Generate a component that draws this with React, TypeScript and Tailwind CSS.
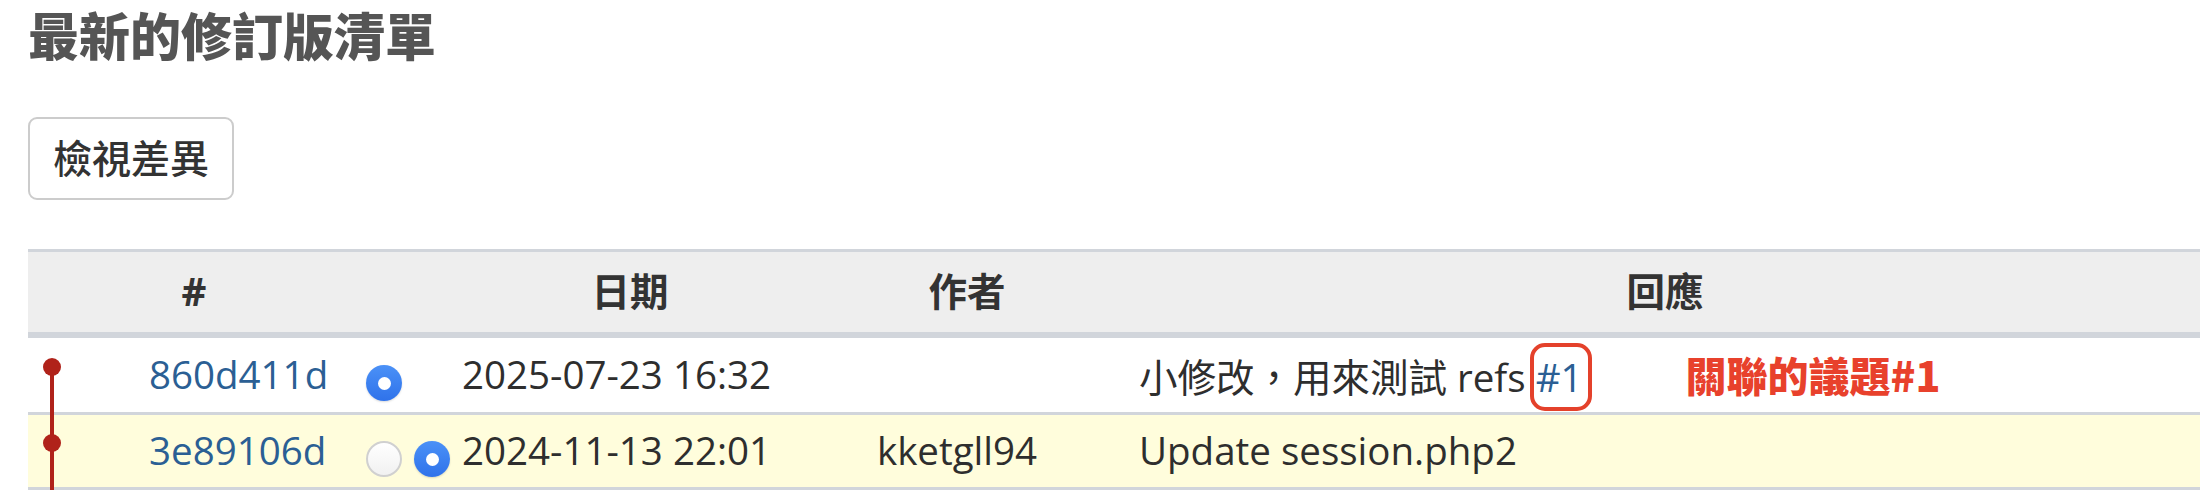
import React from "react";

type Revision = {
  id: string;
  date: string;
  author: string;
  comment: React.ReactNode;
  highlight: boolean;
  first: boolean;
};

const font = "font-['Open_Sans','Noto_Sans_CJK_TC',sans-serif]";

function Radio({ checked }: { checked: boolean }) {
  if (checked) {
    return (
      <span className="flex h-[36px] w-[36px] items-center justify-center rounded-full bg-gradient-to-b from-[#4b91f7] to-[#2f72ea] shadow-[0_1px_2px_rgba(0,0,0,0.15)]">
        <span className="h-[13px] w-[13px] rounded-full bg-white" />
      </span>
    );
  }
  return <span className="block h-[36px] w-[36px] rounded-full border-2 border-[#d0d0d0] bg-gradient-to-b from-white to-[#f1f1f1]" />;
}

const revisions: Revision[] = [
  {
    id: "860d411d",
    date: "2025-07-23 16:32",
    author: "",
    highlight: false,
    first: true,
    comment: (
      <>
        小修改，用來測試 refs{" "}
        <a className="relative text-[#2b5f94]">
          #1
          <span className="absolute -left-[6px] -right-[9px] -top-[8px] -bottom-[8px] rounded-[15px] border-[4px] border-[#e4412b]" />
        </a>
        <span className="ml-[103px] font-['Noto_Sans_CJK_TC',sans-serif] text-[41px] font-black text-[#e8412c]">關聯的議題#1</span>
      </>
    ),
  },
  {
    id: "3e89106d",
    date: "2024-11-13 22:01",
    author: "kketgll94",
    highlight: true,
    first: false,
    comment: "Update session.php2",
  },
];

export default function App() {
  return (
    <div className={`${font} w-[2208px] bg-white pl-[28px] text-[#2e2e2e]`}>
      <h2 className="h-[66px] pt-[4px] font-['Noto_Sans_CJK_TC',sans-serif] text-[51px] font-black leading-[60px] text-[#555555]">最新的修訂版清單</h2>

      <button type="button" className="mt-[51px] flex h-[83px] w-[206px] items-center justify-center rounded-[9px] border-2 border-[#cccccc] bg-white text-[39px] font-medium text-[#333333]">
        檢視差異
      </button>

      <div className="relative mt-[49px] w-[2172px]">
        <table className="w-full table-fixed border-separate border-spacing-0 text-[38.5px]">
          <colgroup>
            <col className="w-[332px]" />
            <col className="w-[48px]" />
            <col className="w-[48px]" />
            <col className="w-[348px]" />
            <col className="w-[326px]" />
            <col />
          </colgroup>
          <thead>
            <tr className="bg-[#eeeeee] font-bold text-[#333333]">
              <th className="h-[89px] border-t-[3px] border-b-[6px] border-[#d1d5db] text-center">#</th>
              <th className="h-[89px] border-t-[3px] border-b-[6px] border-[#d1d5db]" />
              <th className="h-[89px] border-t-[3px] border-b-[6px] border-[#d1d5db]" />
              <th className="h-[89px] border-t-[3px] border-b-[6px] border-[#d1d5db] text-center">日期</th>
              <th className="h-[89px] border-t-[3px] border-b-[6px] border-[#d1d5db] text-center">作者</th>
              <th className="h-[89px] border-t-[3px] border-b-[6px] border-[#d1d5db] text-center">回應</th>
            </tr>
          </thead>
          <tbody>
            {revisions.map((rev) => {
              const cell = `border-b-[3px] border-[#d1d5db] ${rev.first ? "h-[77px]" : "h-[75px]"}`;
              return (
                <tr key={rev.id} className={rev.highlight ? "bg-[#fffddc]" : "bg-white"}>
                  <td className={`${cell} pl-[121px] text-[#2b5f94]`}>
                    <a>{rev.id}</a>
                  </td>
                  <td className={cell}>
                    <div className="flex justify-center pt-[16px]">
                      <Radio checked={rev.first} />
                    </div>
                  </td>
                  <td className={cell}>
                    {!rev.first ? (
                      <div className="flex justify-center pt-[16px]">
                        <Radio checked />
                      </div>
                    ) : null}
                  </td>
                  <td className={`${cell} pl-[6px] whitespace-nowrap`}>{rev.date}</td>
                  <td className={`${cell} pr-[20px] text-center`}>{rev.author}</td>
                  <td className={`${cell} pl-[9px] whitespace-nowrap`}>{rev.comment}</td>
                </tr>
              );
            })}
          </tbody>
        </table>

        <svg className="absolute left-0 top-0" width="60" height="245" viewBox="0 0 60 245">
          <line x1="24" y1="118" x2="24" y2="245" stroke="#b0221a" strokeWidth="4" />
          <circle cx="24" cy="118" r="9" fill="#b0221a" />
          <circle cx="24" cy="194" r="9" fill="#b0221a" />
        </svg>
      </div>
    </div>
  );
}
